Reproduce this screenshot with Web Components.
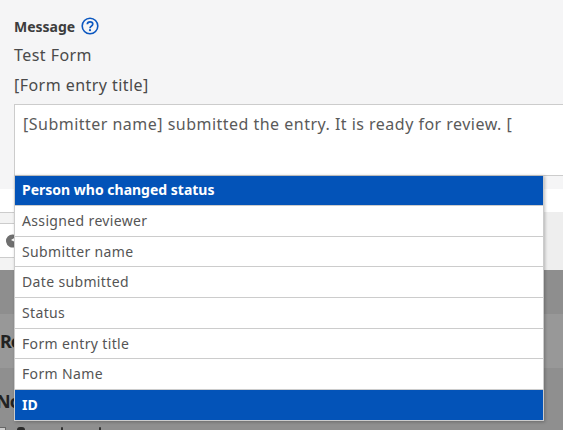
<!DOCTYPE html>
<html><head><meta charset="utf-8"><style>
html,body{margin:0;padding:0;height:430px;overflow:hidden;background:#909090}
</style></head><body>
<form-page></form-page>
<script>
const FONT='"Noto Sans","Open Sans",sans-serif';
class HelpIcon extends HTMLElement{constructor(){super();this.attachShadow({mode:'open'}).innerHTML=`<style>:host{display:inline-flex;width:18px;height:18px}svg{display:block}</style>
<svg width="18" height="18" viewBox="0 0 18 18" fill="none"><circle cx="9" cy="9" r="7.8" stroke="#0b57c0" stroke-width="1.6"/><path d="M6.3 7.2C6.4 5.6 7.6 4.8 9 4.8c1.6 0 2.8.9 2.8 2.3 0 1.1-.7 1.7-1.5 2.2-.8.5-1.3 1-1.3 1.9" stroke="#0b57c0" stroke-width="1.7"/><circle cx="9" cy="13.2" r="1.1" fill="#0b57c0"/></svg>`}}
customElements.define('help-icon',HelpIcon);
class MenuRow extends HTMLElement{constructor(){super();this.attachShadow({mode:'open'}).innerHTML=`<style>
:host{display:flex;align-items:center;height:29.7px;padding:0 7px;background:#fff;color:#555;font:14px/1 ${FONT};letter-spacing:.35px;border-bottom:1px solid #ccc}
:host([active]){background:#0353b8;color:#fff;font-weight:700;letter-spacing:0}
:host(:first-child){height:27px;padding-bottom:2px}
:host(:last-child){border-bottom:0;height:30px}
</style><slot></slot>`}}
customElements.define('menu-row',MenuRow);
class TokenMenu extends HTMLElement{constructor(){super();this.attachShadow({mode:'open'}).innerHTML=`<style>
:host{position:absolute;left:14px;top:175px;width:528px;display:block;background:#fff;border:1px solid #ccc;border-top-color:#bbb;box-shadow:1px 1px 3px rgba(0,0,0,.25)}
</style><slot></slot>`}}
customElements.define('token-menu',TokenMenu);
class FormPage extends HTMLElement{constructor(){super();this.attachShadow({mode:'open'}).innerHTML=`<style>
:host{display:block;position:relative;width:563px;height:430px;overflow:hidden;font-family:${FONT};color:#4a4a4a}
.top{height:189px;box-sizing:border-box;background:#f5f5f6;padding:17px 0 0 14px;display:flex;flex-direction:column}
.label{display:flex;align-items:center;gap:6px;height:18px;font-size:14px;font-weight:700;color:#3d3d3d}
.line{font-size:16px;letter-spacing:.45px;line-height:30px;height:30px;color:#4a4a4a}
.line.first{margin-top:5px}
.editor{margin-top:4px;height:72px;background:#fff;border:1px solid #ccc;border-right:0;padding:0 0 0 8px;font-size:16px;letter-spacing:.48px;line-height:27px;white-space:nowrap;color:#5a5a5a;overflow:hidden;box-sizing:border-box}
.editor span{display:block;padding-top:6px}
.mid{height:23px;background:#fff}
.wrap{display:flex;height:58px}
.left{flex:1;display:flex;flex-direction:column}
.band{height:11px;background:#f3f3f3;border-top:1px solid #ccc;box-sizing:border-box}
.tool{height:34px;background:#fff;border-top:1px solid #ccc;box-sizing:border-box;padding-left:6px;display:flex;align-items:center}
.foot{height:13px;background:#f3f3f3;border-top:1px solid #ccc;box-sizing:border-box}
.side{width:19px;background:#eee}
.d1{height:44px;background:#8e8e8e}
.d2{height:54px;background:#989898;font-size:18px;font-weight:700;color:#222;display:flex;align-items:center;line-height:1;letter-spacing:-1px}
.d3{height:62px;background:#8f8f8f;color:#222;display:flex;flex-direction:column}
.n{font-size:18px;font-weight:700;padding-top:24px;line-height:18px;height:18px;margin-left:-4px;letter-spacing:-1px;margin-bottom:1px}
.s{margin-top:16px;display:flex;gap:11px;height:3px}
.s u{display:block;width:6px;height:6px;background:#ccc;border:1px solid #666;margin-left:-2px}
.s i{display:block;width:8px;height:3px;background:#2b2b2b;border-radius:3px 3px 0 0}
.s i+i{width:2px;background:#333;margin-left:25px}
</style>
<section class="top">
<div class="label"><span>Message</span><help-icon></help-icon></div>
<div class="line first">Test Form</div>
<div class="line">[Form entry title]</div>
<div class="editor"><span>[Submitter name] submitted the entry. It is ready for review. [</span></div>
</section>
<div class="mid"></div>
<div class="wrap"><div class="left">
<div class="band"></div>
<div class="tool"><svg width="9" height="14" viewBox="0 0 9 14"><path d="M7 0.5A6.5 6.5 0 1 0 9 13L9 8L5 6L9 3.5L9 1Z" fill="#6f6f6f"/></svg></div>
<div class="foot"></div>
</div><div class="side"></div></div>
<div class="d1"></div>
<div class="d2"><span>Re</span></div>
<div class="d3"><div class="n">No</div><div class="s"><u></u><i></i><i></i><i></i></div></div>
<token-menu>
<menu-row active>Person who changed status</menu-row>
<menu-row>Assigned reviewer</menu-row>
<menu-row>Submitter name</menu-row>
<menu-row>Date submitted</menu-row>
<menu-row>Status</menu-row>
<menu-row>Form entry title</menu-row>
<menu-row>Form Name</menu-row>
<menu-row active>ID</menu-row>
</token-menu>`}}
customElements.define('form-page',FormPage);
</script></body></html>
